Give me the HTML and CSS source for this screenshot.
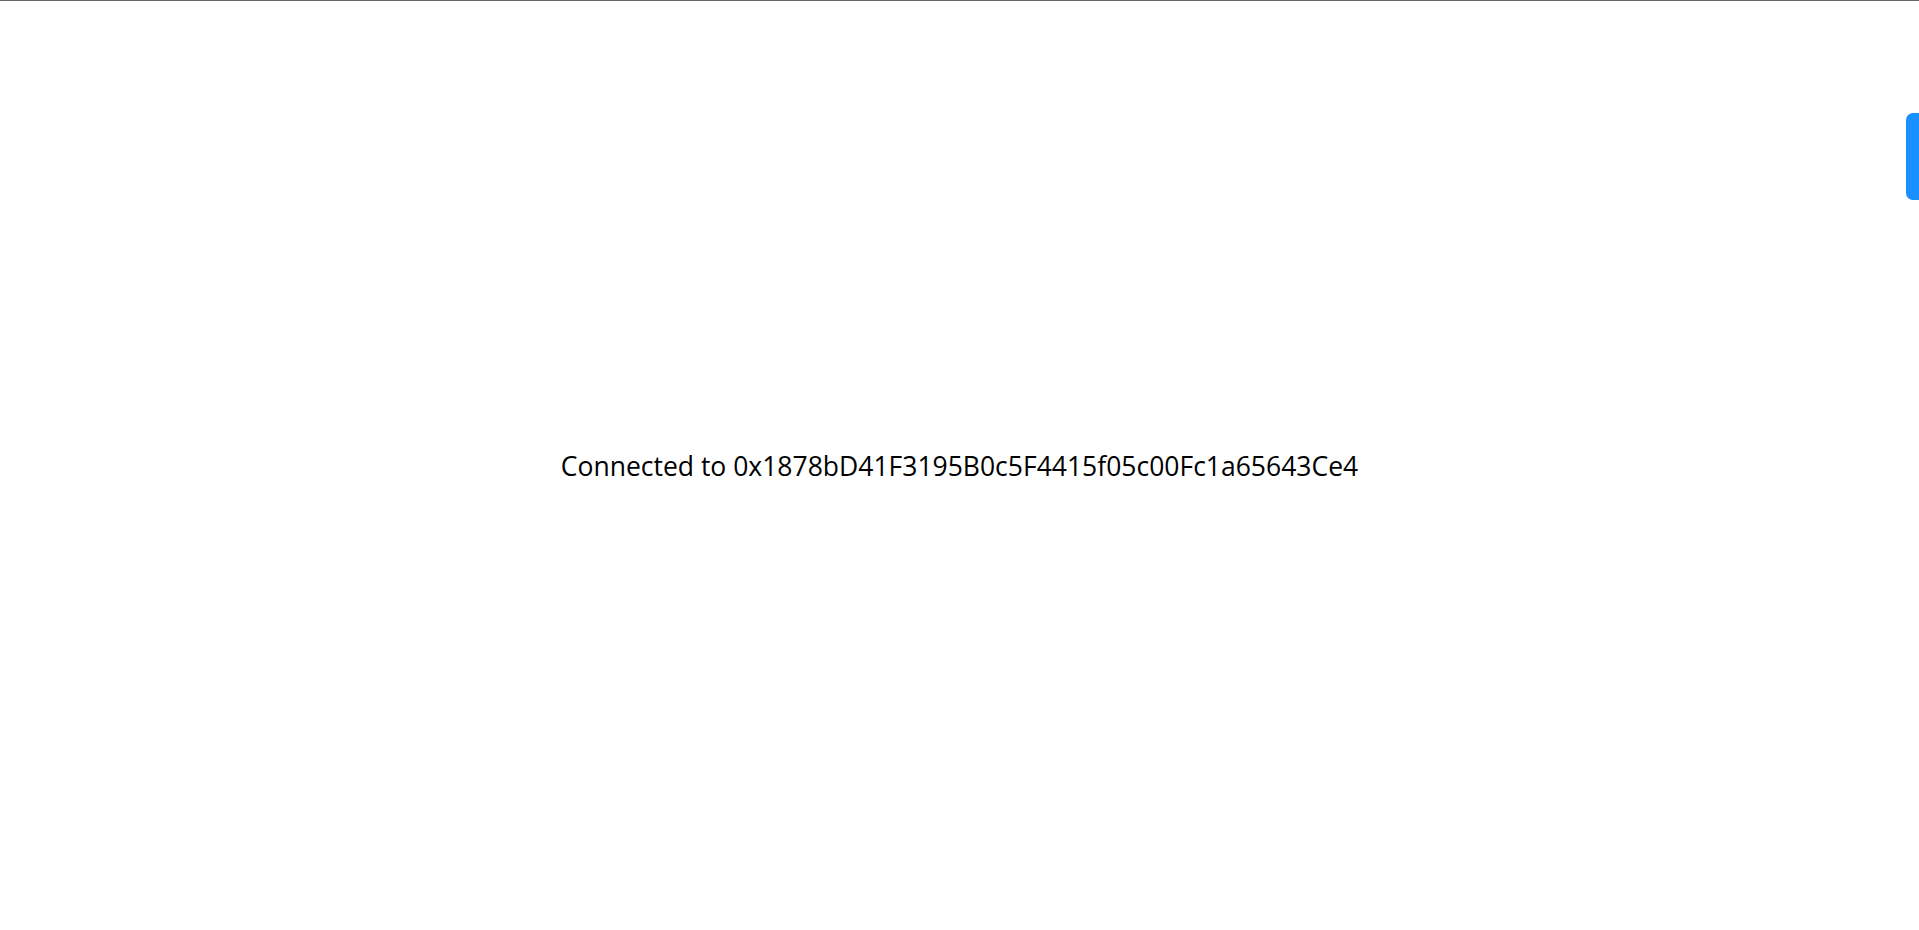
FILE: index.html
```html
<!DOCTYPE html>
<html lang="en">
<head>
<meta charset="utf-8">
<title>Connected</title>
<link rel="stylesheet" href="styles.css">
</head>
<body>
<div class="topline"></div>
<main class="stage">
  <p class="status">Connected to 0x1878bD41F3195B0c5F4415f05c00Fc1a65643Ce4</p>
</main>
<div class="side-tab"></div>
</body>
</html>
```
FILE: styles.css
```css
html, body {
  margin: 0;
  padding: 0;
  background: #ffffff;
}
body {
  font-family: "Open Sans", "Noto Sans", sans-serif;
  color: #000000;
  height: 100vh;
  overflow: hidden;
  display: flex;
  flex-direction: column;
}
.topline {
  height: 1px;
  background: #666666;
  flex: none;
}
.stage {
  flex: 1;
  display: flex;
  align-items: center;
  justify-content: center;
}
.status {
  margin: 0;
  font-size: 26.5px;
  line-height: normal;
}
.side-tab {
  position: fixed;
  top: 113px;
  right: 0;
  width: 13px;
  height: 87px;
  background: #1890ff;
  border-radius: 7px 0 0 7px;
}
```
